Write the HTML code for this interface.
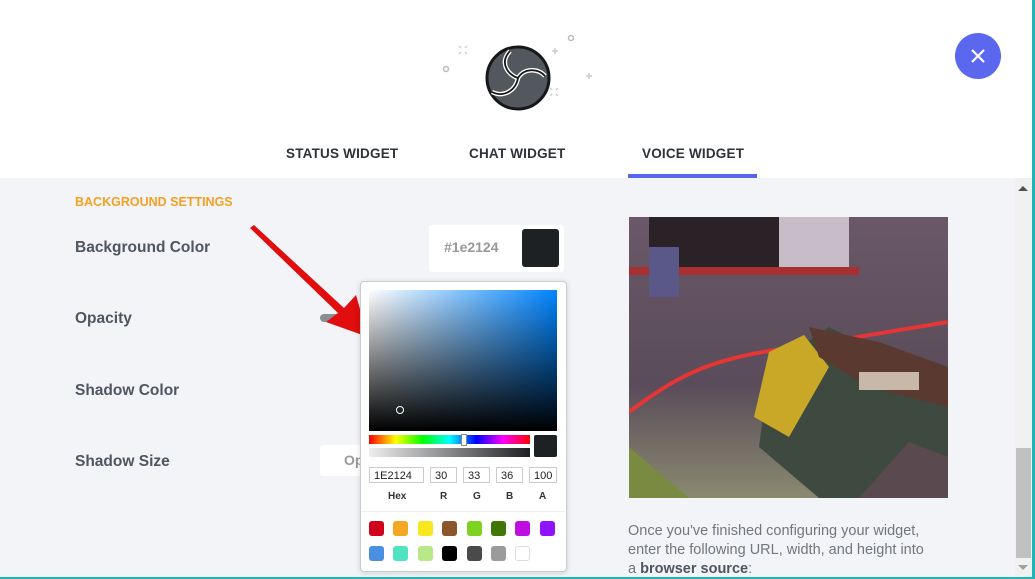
<!DOCTYPE html>
<html><head><style>
body{margin:0;width:1035px;height:579px;overflow:hidden;font-family:"Liberation Sans",sans-serif;position:relative;background:#f2f4f8}
.hdr{position:absolute;left:0;top:0;width:1035px;height:178px;background:#fff}
.tab{position:absolute;top:146px;font-weight:bold;font-size:13.5px;color:#2e3338;letter-spacing:.2px}
.lbl{position:absolute;left:75px;font-size:15.5px;font-weight:bold;color:#4f5660}
.a{position:absolute}
.sw{position:absolute;width:15px;height:15px;border-radius:3px}
.inp{position:absolute;top:467px;height:16px;border:1px solid #ccc;font-size:11px;line-height:16px;padding-left:4px;box-sizing:border-box;color:#222;background:#fff}
.cl{position:absolute;top:491px;font-size:10px;font-weight:bold;color:#333}
</style></head><body>
<div class="hdr"></div>
<svg class="a" style="left:440px;top:30px" width="160" height="85">
<circle cx="78" cy="48" r="31" fill="#53585f" stroke="#151719" stroke-width="3"/>
<g transform="translate(78,48)">
<path d="M-8 -27 C-20 -14 -8 -2 0 0 C6 -10 20 -10 27 -2 M0 0 C-2 12 -14 20 -26 14" stroke="#fff" stroke-width="4.5" fill="none"/>
<path d="M-8 -27 C-20 -14 -8 -2 0 0 C6 -10 20 -10 27 -2 M0 0 C-2 12 -14 20 -26 14" stroke="#151719" stroke-width="1.8" fill="none"/>
</g>
<circle cx="6" cy="39" r="2.5" fill="none" stroke="#bbb" stroke-width="1.5"/>
<circle cx="131" cy="8" r="2.5" fill="none" stroke="#bbb" stroke-width="1.5"/>
<path d="M115 18v6M112 21h6M149 43v6M146 46h6" stroke="#ccc" stroke-width="1.5"/>
<path d="M19 16l2 2M27 16l-2 2M19 24l2-2M27 24l-2-2M110 58l2 2M118 58l-2 2M110 66l2-2M118 66l-2-2" stroke="#ccc" stroke-width="1.3"/>
</svg>
<div class="a" style="left:955px;top:33px;width:46px;height:46px;border-radius:50%;background:#5c67f0"></div>
<svg class="a" style="left:970px;top:48px" width="16" height="16"><path d="M2 2L14 14M14 2L2 14" stroke="#fff" stroke-width="2.2"/></svg>
<div class="tab" style="left:286px">STATUS WIDGET</div>
<div class="tab" style="left:469px">CHAT WIDGET</div>
<div class="tab" style="left:642px">VOICE WIDGET</div>
<div class="a" style="left:628px;top:174px;width:129px;height:4px;background:#5865f2"></div>

<div class="a" style="left:75px;top:195px;font-size:12.5px;font-weight:bold;color:#f5a020">BACKGROUND SETTINGS</div>
<div class="lbl" style="top:239px">Background Color</div>
<div class="lbl" style="top:310px">Opacity</div>
<div class="lbl" style="top:382px">Shadow Color</div>
<div class="lbl" style="top:453px">Shadow Size</div>
<div class="a" style="left:429px;top:225px;width:135px;height:47px;background:#fff;border-radius:3px"></div>
<div class="a" style="left:444px;top:239px;font-size:14px;font-weight:bold;color:#999">#1e2124</div>
<div class="a" style="left:522px;top:229px;width:37px;height:38px;border-radius:3px;background:#1e2124"></div>
<div class="a" style="left:320px;top:314px;width:45px;height:8px;border-radius:4px;background:#8a8f96"></div>
<div class="a" style="left:320px;top:445px;width:45px;height:31px;background:#fff;border-radius:3px;font-size:14px;font-weight:bold;color:#999;line-height:31px;text-indent:24px">Op</div>

<svg class="a" style="left:240px;top:220px" width="140" height="130"><polygon points="10,8 14,5 104,88 116,75 128,117 86,102 98,93" fill="#e00e0e"/></svg>

<div class="a" style="left:360px;top:281px;width:205px;height:289px;background:#fff;border:1px solid #ccc;border-radius:4px;box-shadow:0 1px 6px rgba(0,0,0,.15)"></div>
<div class="a" style="left:369px;top:290px;width:188px;height:141px;background:linear-gradient(to top,#000,rgba(0,0,0,0)),linear-gradient(to right,#fff,#0084ff)"></div>
<div class="a" style="left:396px;top:406px;width:6px;height:6px;border:1.5px solid #fff;border-radius:50%"></div>
<div class="a" style="left:369px;top:435px;width:161px;height:9px;background:linear-gradient(to right,red,#ff0,lime,cyan,blue,#f0f,red)"></div>
<div class="a" style="left:461px;top:434px;width:4px;height:10px;background:#fff;border:1px solid #888"></div>
<div class="a" style="left:369px;top:448px;width:161px;height:9px;background:linear-gradient(to right,#eee,#1e2124)"></div>
<div class="a" style="left:534px;top:435px;width:23px;height:22px;border-radius:2px;background:#1e2124"></div>
<div class="inp" style="left:369px;width:55px">1E2124</div>
<div class="inp" style="left:430px;width:27px">30</div>
<div class="inp" style="left:463px;width:27px">33</div>
<div class="inp" style="left:496px;width:27px">36</div>
<div class="inp" style="left:529px;width:28px">100</div>
<div class="cl" style="left:388px">Hex</div><div class="cl" style="left:440px">R</div><div class="cl" style="left:473px">G</div><div class="cl" style="left:506px">B</div><div class="cl" style="left:539px">A</div>
<div class="a" style="left:361px;top:511px;width:204px;height:1px;background:#eee"></div>
<div class="sw" style="left:369px;top:521px;background:#d0021b"></div><div class="sw" style="left:393px;top:521px;background:#f5a623"></div><div class="sw" style="left:418px;top:521px;background:#f8e71c"></div><div class="sw" style="left:442px;top:521px;background:#8b572a"></div><div class="sw" style="left:467px;top:521px;background:#7ed321"></div><div class="sw" style="left:491px;top:521px;background:#417505"></div><div class="sw" style="left:515px;top:521px;background:#bd10e0"></div><div class="sw" style="left:540px;top:521px;background:#9013fe"></div>
<div class="sw" style="left:369px;top:546px;background:#4a90e2"></div><div class="sw" style="left:393px;top:546px;background:#50e3c2"></div><div class="sw" style="left:418px;top:546px;background:#b8e986"></div><div class="sw" style="left:442px;top:546px;background:#000"></div><div class="sw" style="left:467px;top:546px;background:#4a4a4a"></div><div class="sw" style="left:491px;top:546px;background:#9b9b9b"></div><div class="sw" style="left:515px;top:546px;background:#fff;border:1px solid #ddd;box-sizing:border-box"></div>

<svg class="a" style="left:629px;top:217px" width="319" height="281">
<defs><linearGradient id="fl" x1="0" y1="0" x2="0" y2="1"><stop offset="0" stop-color="#6a5868"/><stop offset=".6" stop-color="#5a4c5a"/><stop offset="1" stop-color="#8a8a70"/></linearGradient></defs>
<rect width="319" height="281" fill="url(#fl)"/>
<rect x="20" y="0" width="200" height="55" fill="#2b2228"/>
<rect x="150" y="0" width="70" height="50" fill="#c8bcc8"/>
<rect x="0" y="50" width="230" height="8" fill="#a83030"/>
<polygon points="0,230 60,281 0,281" fill="#7a8a40"/>
<path d="M0 195 C60 150 90 140 180 128 L319 105" stroke="#e53535" stroke-width="4" fill="none"/>
<polygon points="140,150 200,110 319,170 319,281 190,281 130,230" fill="#3e4a40"/>
<polygon points="140,135 175,118 200,150 160,220 125,200" fill="#c9a828"/>
<polygon points="180,110 250,125 319,150 319,190 240,170 190,140" fill="#5a3a30"/>
<rect x="230" y="155" width="60" height="18" fill="#c8b8a8"/>
<polygon points="230,281 280,225 319,240 319,281" fill="#5a4a50"/>
<rect x="20" y="30" width="30" height="50" fill="#5a5888"/>
</svg>

<div class="a" style="left:628px;top:522px;width:300px;font-size:14.5px;line-height:19px;color:#72767d">Once you've finished configuring your widget, enter the following URL, width, and height into a <b style="color:#4f5660">browser source</b>:</div>

<div class="a" style="left:1015px;top:178px;width:17px;height:401px;background:#f1f1f1"></div>
<div class="a" style="left:1016px;top:448px;width:15px;height:110px;background:#c1c1c1"></div>
<div class="a" style="left:1018px;top:186px;width:0;height:0;border:5px solid transparent;border-bottom-color:#505050;border-top:0"></div>
<div class="a" style="left:1018px;top:565px;width:0;height:0;border:5px solid transparent;border-top-color:#a0a0a0;border-bottom:0"></div>
<div class="a" style="left:1032px;top:0;width:3px;height:579px;background:#1fb5b5"></div>
<div class="a" style="left:0;top:577px;width:1035px;height:2px;background:#1fb5b5"></div>
</body></html>
